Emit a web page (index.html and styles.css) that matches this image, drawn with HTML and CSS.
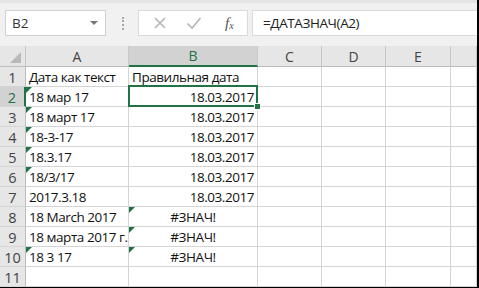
FILE: index.html
```html
<!DOCTYPE html>
<html lang="ru">
<head>
    <meta charset="UTF-8">
    <title>ДАТАЗНАЧ</title>
    <link rel="stylesheet" href="styles.css">
</head>
<body>
    <div class="app">
        <div class="toolbar">
            <div class="name-box">
                <span>B2</span>
                <span class="dropdown"></span>
            </div>
            <div class="grip"></div>
            <div class="fx-buttons">
                <svg class="fx-icon" width="14" height="14" viewBox="0 0 14 14">
                    <path d="M2 2 L12 12 M12 2 L2 12" stroke="#b4b4b4" stroke-width="1.6" fill="none"/>
                </svg>
                <svg class="fx-icon" width="16" height="14" viewBox="0 0 16 14">
                    <path d="M1.5 7.5 L6 12 L14.5 2" stroke="#b4b4b4" stroke-width="1.6" fill="none"/>
                </svg>
                <span class="fx-label">f<sub>x</sub></span>
            </div>
            <div class="formula">=ДАТАЗНАЧ(A2)</div>
        </div>

        <div class="sheet">
            <div class="corner"><span class="corner-mark"></span></div>
            <div class="col-head">A</div>
            <div class="col-head active">B</div>
            <div class="col-head">C</div>
            <div class="col-head">D</div>
            <div class="col-head">E</div>
            <div class="col-head"></div>

            <div class="row-head">1</div>
            <div class="cell">Дата как текст</div>
            <div class="cell">Правильная дата</div>
            <div class="cell"></div><div class="cell"></div><div class="cell"></div><div class="cell"></div>

            <div class="row-head active">2</div>
            <div class="cell err">18 мар 17</div>
            <div class="cell num selected">18.03.2017<span class="handle"></span></div>
            <div class="cell"></div><div class="cell"></div><div class="cell"></div><div class="cell"></div>

            <div class="row-head">3</div>
            <div class="cell err">18 март 17</div>
            <div class="cell num">18.03.2017</div>
            <div class="cell"></div><div class="cell"></div><div class="cell"></div><div class="cell"></div>

            <div class="row-head">4</div>
            <div class="cell err">18-3-17</div>
            <div class="cell num">18.03.2017</div>
            <div class="cell"></div><div class="cell"></div><div class="cell"></div><div class="cell"></div>

            <div class="row-head">5</div>
            <div class="cell err">18.3.17</div>
            <div class="cell num">18.03.2017</div>
            <div class="cell"></div><div class="cell"></div><div class="cell"></div><div class="cell"></div>

            <div class="row-head">6</div>
            <div class="cell err">18/3/17</div>
            <div class="cell num">18.03.2017</div>
            <div class="cell"></div><div class="cell"></div><div class="cell"></div><div class="cell"></div>

            <div class="row-head">7</div>
            <div class="cell">2017.3.18</div>
            <div class="cell num">18.03.2017</div>
            <div class="cell"></div><div class="cell"></div><div class="cell"></div><div class="cell"></div>

            <div class="row-head">8</div>
            <div class="cell">18 March 2017</div>
            <div class="cell mid err">#ЗНАЧ!</div>
            <div class="cell"></div><div class="cell"></div><div class="cell"></div><div class="cell"></div>

            <div class="row-head">9</div>
            <div class="cell">18 марта 2017 г.</div>
            <div class="cell mid err">#ЗНАЧ!</div>
            <div class="cell"></div><div class="cell"></div><div class="cell"></div><div class="cell"></div>

            <div class="row-head">10</div>
            <div class="cell err">18 3 17</div>
            <div class="cell mid err">#ЗНАЧ!</div>
            <div class="cell"></div><div class="cell"></div><div class="cell"></div><div class="cell"></div>

            <div class="row-head">11</div>
            <div class="cell"></div>
            <div class="cell"></div>
            <div class="cell"></div><div class="cell"></div><div class="cell"></div><div class="cell"></div>
        </div>
    </div>
</body>
</html>
```

FILE: styles.css
```css
html,
body {
    margin: 0;
    background: #000000;
    font-family: "Open Sans", "Noto Sans", sans-serif;
}

.app {
    width: 477px;
    height: 287px;
    background: #ffffff;
    overflow: hidden;
    display: flex;
    flex-direction: column;
}

/* formula bar */
.toolbar {
    flex: 0 0 46px;
    box-sizing: border-box;
    border-top: 3px solid #e4e4e4;
    background: #f1f1f1;
    display: flex;
    align-items: center;
    padding: 0 0 3px 5px;
}

.name-box {
    width: 101px;
    height: 26px;
    box-sizing: border-box;
    background: #ffffff;
    border: 1px solid #d0d0d0;
    display: flex;
    align-items: center;
    justify-content: space-between;
    padding: 0 7px 0 6px;
    font-size: 13.5px;
    color: #333333;
}

.dropdown {
    width: 0;
    height: 0;
    border-left: 4px solid transparent;
    border-right: 4px solid transparent;
    border-top: 4px solid #777777;
}

.grip {
    width: 0;
    height: 13px;
    margin: 0 14px 0 16px;
    border-left: 2px dotted #a8a8a8;
}

.fx-buttons {
    width: 110px;
    height: 26px;
    box-sizing: border-box;
    background: #ffffff;
    border: 1px solid #dadada;
    display: flex;
    align-items: center;
    padding-left: 14px;
    gap: 19px;
}

.fx-label {
    font-family: "Liberation Serif", serif;
    font-style: italic;
    font-size: 15px;
    color: #555555;
    margin-left: 4px;
}

.fx-label sub {
    font-size: 10px;
    vertical-align: -1px;
}

.formula {
    flex: 1;
    height: 26px;
    margin-left: 4px;
    background: #ffffff;
    border: 1px solid #dadada;
    border-right: none;
    box-sizing: border-box;
    padding-left: 10px;
    font-size: 13.5px;
    letter-spacing: -0.4px;
    line-height: 24px;
    color: #222222;
}

/* grid */
.sheet {
    flex: none;
    display: grid;
    grid-template-columns: 26px 103px 129px 64px 64px 65px 26px;
    grid-template-rows: 21px;
    grid-auto-rows: 20px;
    font-size: 13.5px;
    letter-spacing: -0.45px;
}

.corner,
.col-head,
.row-head {
    background: #e6e6e6;
    color: #444444;
    box-sizing: border-box;
    border-right: 1px solid #c8c8c8;
    border-bottom: 1px solid #bcbcbc;
    display: flex;
    align-items: center;
    justify-content: center;
    font-size: 14px;
    letter-spacing: 0;
}

.corner {
    position: relative;
}

.corner-mark {
    position: absolute;
    right: 4px;
    bottom: 3px;
    width: 0;
    height: 0;
    border-left: 11px solid transparent;
    border-bottom: 11px solid #b9b9b9;
}

.col-head.active {
    background: #d2d2d2;
    color: #217346;
    border-bottom: 2px solid #217346;
}

.row-head {
    border-bottom-color: #d4d4d4;
    border-right-color: #bcbcbc;
    padding-top: 1px;
    font-size: 14.5px;
}

.row-head.active {
    background: #d2d2d2;
    color: #217346;
    border-right: 2px solid #217346;
}

.cell {
    position: relative;
    box-sizing: border-box;
    border-right: 1px solid #d4d4d4;
    border-bottom: 1px solid #d4d4d4;
    padding: 0 3px;
    display: flex;
    align-items: flex-end;
    line-height: 18px;
    white-space: nowrap;
    color: #111111;
}

.cell.num {
    justify-content: flex-end;
}

.cell.mid {
    justify-content: center;
}

.cell.err::before {
    content: "";
    position: absolute;
    top: 0;
    left: 0;
    border-top: 6px solid #217346;
    border-right: 6px solid transparent;
}

.cell.selected::after {
    content: "";
    position: absolute;
    top: -2px;
    left: -1px;
    right: -1px;
    bottom: -1px;
    border: 2px solid #217346;
}

.handle {
    position: absolute;
    right: -4px;
    bottom: -4px;
    width: 5px;
    height: 5px;
    background: #217346;
    border: 1px solid #ffffff;
    z-index: 1;
}
```
